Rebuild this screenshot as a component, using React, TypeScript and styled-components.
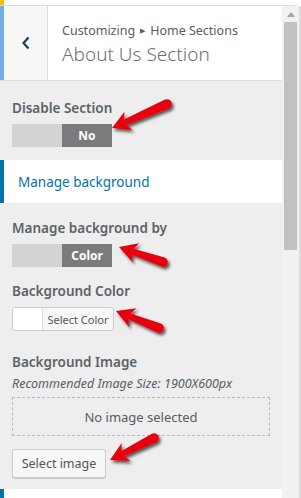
import React from "react";
import styled, { createGlobalStyle } from "styled-components";

const GlobalStyle = createGlobalStyle`
  html, body { margin: 0; padding: 0; background: #fff; }
  body { font-family: "Noto Sans", "Open Sans", sans-serif; color: #555d66; }
  * { box-sizing: border-box; }
`;

const Page = styled.div`
  position: relative;
  width: 301px;
  height: 498px;
  overflow: hidden;
  display: flex;
  flex-direction: column;
  background: #fff;
`;

const TopStrip = styled.div`
  height: 6px;
  flex: none;
  display: flex;
  border-bottom: 1px solid #ddd;
  margin-right: 4px;
`;

const OrangeTab = styled.div`
  width: 4px;
  height: 5px;
  background: #ffb900;
`;

const Frame = styled.div`
  flex: 1;
  display: flex;
  min-height: 0;
`;

const Content = styled.div`
  flex: 1;
  display: flex;
  flex-direction: column;
  background: #eee;
  min-width: 0;
`;

const Header = styled.div`
  height: 75px;
  flex: none;
  display: flex;
  background: #fff;
  border-bottom: 1px solid #ddd;
`;

const BackButton = styled.div`
  width: 48px;
  flex: none;
  display: flex;
  align-items: center;
  justify-content: center;
  background: #f7f7f7;
  border-left: 4px solid #72aee6;
  border-right: 1px solid #ddd;
`;

const HeaderText = styled.div`
  display: flex;
  flex-direction: column;
  padding: 16px 0 0 14px;
`;

const Breadcrumb = styled.div`
  font-size: 12.5px;
  line-height: 18px;
  color: #555d66;
  white-space: nowrap;
`;

const Sep = styled.span`
  font-size: 7px;
  margin: 0 5px;
  vertical-align: 2px;
`;

const Title = styled.div`
  font-size: 19px;
  font-weight: 300;
  line-height: 26px;
  margin-top: 1px;
  color: #6b7177;
  white-space: nowrap;
`;

const Control = styled.div<{ $top?: number }>`
  padding: 0 12px;
  margin-top: ${(p) => p.$top ?? 0}px;
  display: flex;
  flex-direction: column;
  align-items: flex-start;
`;

const Label = styled.div`
  font-size: 13.5px;
  font-weight: 600;
  line-height: 20px;
  color: #5b6369;
  white-space: nowrap;
`;

const Toggle = styled.div`
  margin-top: 6px;
  display: flex;
  width: 100px;
  height: 23px;
`;

const ToggleHalf = styled.div<{ $on?: boolean }>`
  flex: 1;
  display: flex;
  align-items: center;
  justify-content: center;
  background: ${(p) => (p.$on ? "#7b7b7b" : "#d3d3d3")};
  color: #fff;
  font-size: 12px;
  font-weight: 700;
`;

const SectionLink = styled.div<{ $top: number }>`
  margin-top: ${(p) => p.$top}px;
  height: 43px;
  flex: none;
  display: flex;
  align-items: center;
  background: #fff;
  border-left: 4px solid #0073aa;
  padding-left: 14px;
  font-size: 13.5px;
  color: #0073aa;
  white-space: nowrap;
`;

const ColorButton = styled.div`
  margin-top: 6px;
  display: flex;
  width: 102px;
  height: 24px;
  border: 1px solid #ccc;
  border-radius: 3px;
  background: #f7f7f7;
  overflow: hidden;
`;

const Swatch = styled.div`
  width: 30px;
  background: #fff;
  border-right: 1px solid #ddd;
`;

const ColorText = styled.div`
  flex: 1;
  display: flex;
  align-items: center;
  justify-content: center;
  font-size: 11px;
  color: #555;
`;

const Hint = styled.div`
  font-size: 12.5px;
  font-style: italic;
  line-height: 18px;
  margin-top: 3px;
  color: #555d66;
  white-space: nowrap;
`;

const Placeholder = styled.div`
  margin-top: 4px;
  width: 258px;
  height: 39px;
  border: 1px dashed #b4b9be;
  display: flex;
  align-items: center;
  justify-content: center;
  font-size: 13px;
  color: #555d66;
`;

const Button = styled.div`
  margin-top: 13px;
  height: 29px;
  width: 94px;
  display: flex;
  align-items: center;
  justify-content: center;
  border: 1px solid #ccc;
  border-radius: 3px;
  background: #f7f7f7;
  box-shadow: 0 1px 0 #ccc;
  font-size: 12.5px;
  color: #555;
  white-space: nowrap;
`;

const ScrollTrack = styled.div`
  width: 17px;
  flex: none;
  background: #f1f1f1;
  display: flex;
  flex-direction: column;
  align-items: center;
  padding: 0 2px;
`;

const ScrollUp = styled.div`
  height: 16px;
  width: 100%;
  display: flex;
  align-items: center;
  justify-content: center;
`;

const ScrollThumb = styled.div`
  width: 100%;
  height: 228px;
  background: #c1c1c1;
`;

const EdgeLine = styled.div`
  width: 2px;
  flex: none;
  background: #ddd;
`;

const Overlay = styled.svg`
  position: absolute;
  left: 0;
  top: 0;
  pointer-events: none;
  overflow: visible;
`;

type Pt = [number, number];

function Arrow({ tip, tail }: { tip: Pt; tail: Pt }) {
  const dx = tail[0] - tip[0];
  const dy = tail[1] - tip[1];
  const len = Math.hypot(dx, dy);
  const ang = (Math.atan2(dy, dx) * 180) / Math.PI;
  const hl = 18;
  const hw = 10;
  const s1 = 3;
  const s2 = 4.8;
  const d = `M0,0 L${hl},${-hw} L${hl * 0.8},${-s1} L${len},${-s2} A${s2},${s2} 0 0 1 ${len},${s2} L${hl * 0.8},${s1} L${hl},${hw} Z`;
  return (
    <g transform={`translate(${tip[0]},${tip[1]}) rotate(${ang})`}>
      <path d={d} fill="#e8000b" />
    </g>
  );
}

const arrows: { tip: Pt; tail: Pt }[] = [
  { tip: [112, 128], tail: [167, 104] },
  { tip: [119, 247], tail: [163, 262] },
  { tip: [116, 311], tail: [159, 328] },
  { tip: [110, 460], tail: [154, 438] },
];

export default function App() {
  return (
    <>
      <GlobalStyle />
      <Page>
        <TopStrip>
          <OrangeTab />
        </TopStrip>
        <Frame>
          <Content>
            <Header>
              <BackButton>
                <svg width="10" height="14" viewBox="0 0 10 14">
                  <path d="M7.5 1.5 L2.5 7 L7.5 12.5" fill="none" stroke="#1d3d57" strokeWidth="2.2" />
                </svg>
              </BackButton>
              <HeaderText>
                <Breadcrumb>
                  Customizing<Sep>▶</Sep>Home Sections
                </Breadcrumb>
                <Title>About Us Section</Title>
              </HeaderText>
            </Header>

            <Control $top={17}>
              <Label>Disable Section</Label>
              <Toggle>
                <ToggleHalf />
                <ToggleHalf $on>No</ToggleHalf>
              </Toggle>
            </Control>

            <SectionLink $top={13}>Manage background</SectionLink>

            <Control $top={15}>
              <Label>Manage background by</Label>
              <Toggle>
                <ToggleHalf />
                <ToggleHalf $on>Color</ToggleHalf>
              </Toggle>
            </Control>

            <Control $top={14}>
              <Label>Background Color</Label>
              <ColorButton>
                <Swatch />
                <ColorText>Select Color</ColorText>
              </ColorButton>
            </Control>

            <Control $top={21}>
              <Label>Background Image</Label>
              <Hint>Recommended Image Size: 1900X600px</Hint>
              <Placeholder>No image selected</Placeholder>
              <Button>Select image</Button>
            </Control>

            <SectionLink $top={11} />
          </Content>
          <ScrollTrack>
            <ScrollUp>
              <svg width="8" height="5" viewBox="0 0 8 5">
                <path d="M0 5 L4 0 L8 5 Z" fill="#a3a3a3" />
              </svg>
            </ScrollUp>
            <ScrollThumb />
          </ScrollTrack>
          <EdgeLine />
        </Frame>
        <Overlay width="301" height="498" viewBox="0 0 301 498">
          <defs>
            <filter id="sh" x="-20%" y="-20%" width="140%" height="160%">
              <feDropShadow dx="2" dy="2.5" stdDeviation="1.4" floodColor="#000" floodOpacity="0.65" />
            </filter>
          </defs>
          <g filter="url(#sh)">
            {arrows.map((a, i) => (
              <Arrow key={i} tip={a.tip} tail={a.tail} />
            ))}
          </g>
        </Overlay>
      </Page>
    </>
  );
}
